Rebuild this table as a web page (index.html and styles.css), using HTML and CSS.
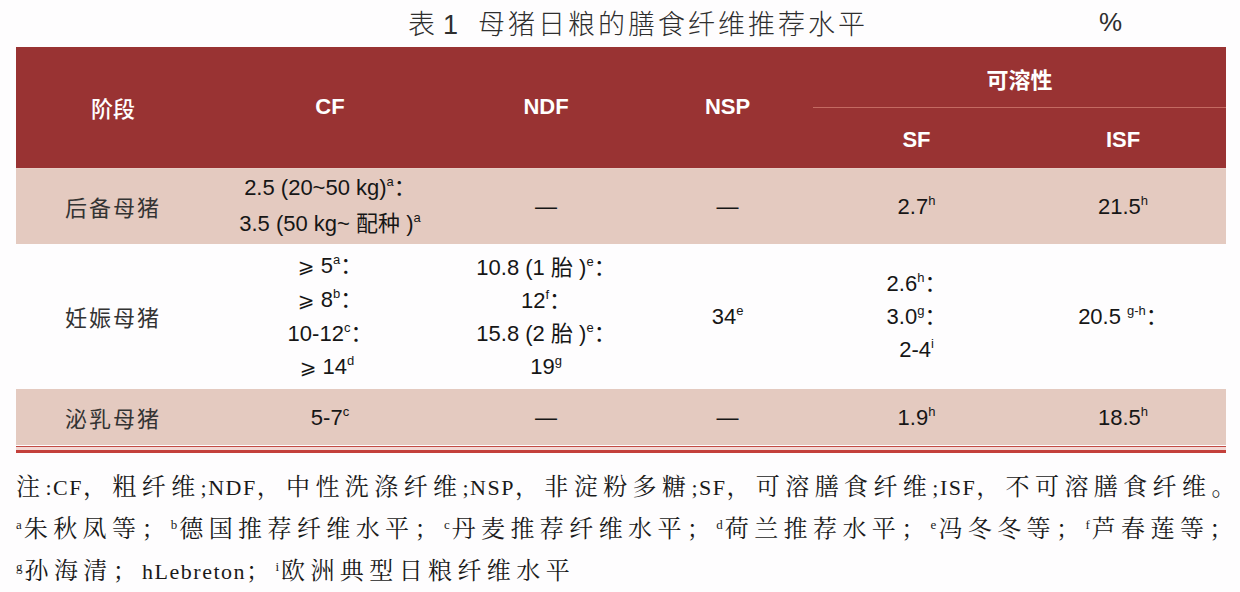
FILE: index.html
```html
<!DOCTYPE html>
<html lang="zh-CN">
<head>
<meta charset="utf-8">
<title>表1 母猪日粮的膳食纤维推荐水平</title>
<link rel="stylesheet" href="styles.css">
</head>
<body>
<div class="page">
  <div class="caption">
    <span class="caption-title">表<span class="num">1</span>母猪日粮的膳食纤维推荐水平</span>
    <span class="caption-unit">%</span>
  </div>
  <table class="fiber">
    <colgroup>
      <col class="c1"><col class="c2"><col class="c3"><col class="c4"><col class="c5"><col class="c6">
    </colgroup>
    <thead>
      <tr class="h1">
        <th rowspan="2" class="stage-head">阶段</th>
        <th rowspan="2">CF</th>
        <th rowspan="2">NDF</th>
        <th rowspan="2">NSP</th>
        <th colspan="2" class="group">可溶性</th>
      </tr>
      <tr class="h2">
        <th>SF</th>
        <th>ISF</th>
      </tr>
    </thead>
    <tbody>
      <tr class="r1 shade">
        <td class="stage">后备母猪</td>
        <td class="lines36">2.5 (20~50 kg)<sup>a</sup>：<br>3.5 (50 kg~ 配种 )<sup>a</sup></td>
        <td>—</td>
        <td>—</td>
        <td>2.7<sup>h</sup></td>
        <td>21.5<sup>h</sup></td>
      </tr>
      <tr class="r2">
        <td class="stage">妊娠母猪</td>
        <td><span class="ge">⩾</span> 5<sup>a</sup>：<br><span class="ge">⩾</span> 8<sup>b</sup>：<br>10-12<sup>c</sup>：<br><span class="ge">⩾</span> 14<sup>d</sup>&nbsp;</td>
        <td>10.8 (1 胎 )<sup>e</sup>：<br>12<sup>f</sup>：<br>15.8 (2 胎 )<sup>e</sup>：<br>19<sup>g</sup></td>
        <td>34<sup>e</sup></td>
        <td>2.6<sup>h</sup>：<br>3.0<sup>g</sup>：<br>2-4<sup>i</sup></td>
        <td>20.5 <sup>g-h</sup>：</td>
      </tr>
      <tr class="r3 shade">
        <td class="stage">泌乳母猪</td>
        <td>5-7<sup>c</sup></td>
        <td>—</td>
        <td>—</td>
        <td>1.9<sup>h</sup></td>
        <td>18.5<sup>h</sup></td>
      </tr>
    </tbody>
  </table>
  <div class="double-rule"></div>
  <div class="notes">
    <p class="n1">注<span class="lat">:CF</span>，粗纤维<span class="lat">;NDF</span>，中性洗涤纤维<span class="lat">;NSP</span>，非淀粉多糖<span class="lat">;SF</span>，可溶膳食纤维<span class="lat">;ISF</span>，不可溶膳食纤维。</p>
    <p class="n2"><sup>a</sup>朱秋凤等；<sup>b</sup>德国推荐纤维水平；<sup>c</sup>丹麦推荐纤维水平；<sup>d</sup>荷兰推荐水平；<sup>e</sup>冯冬冬等；<sup>f</sup>芦春莲等；</p>
    <p class="n3"><sup>g</sup>孙海清；<span class="lat">hLebreton</span>；<sup>i</sup>欧洲典型日粮纤维水平</p>
  </div>
</div>
</body>
</html>
```
FILE: styles.css
```css
html, body {
  margin: 0;
  padding: 0;
  background: #fefdfe;
}
.page {
  width: 1240px;
  height: 592px;
  padding-left: 16px;
  box-sizing: border-box;
  overflow: hidden;
}
.caption {
  display: flex;
  align-items: center;
  height: 44px;
  padding-left: 392px;
  padding-right: 118px;
  margin-bottom: 3px;
  font-family: "Noto Sans CJK SC", "Liberation Sans", sans-serif;
  color: #2e2e2e;
}
.caption-title {
  font-size: 27px;
  font-weight: 300;
  letter-spacing: 3px;
}
.caption-title .num {
  font-family: "Liberation Sans", sans-serif;
  letter-spacing: 0;
  margin: 0 20px 0 5px;
}
.caption-unit {
  margin-left: auto;
  font-family: "Liberation Sans", sans-serif;
  font-size: 26px;
}
.fiber {
  width: 1210px;
  border-collapse: collapse;
  table-layout: fixed;
  font-family: "Liberation Sans", "Noto Sans CJK SC", sans-serif;
  color: #161616;
}
.c1 { width: 194px; }
.c2 { width: 240px; }
.c3 { width: 192px; }
.c4 { width: 171px; }
.c5 { width: 207px; }
.c6 { width: 206px; }
.fiber th {
  background: #993333;
  color: #ffffff;
  font-size: 22px;
  font-weight: 700;
  padding: 0;
  text-align: center;
  vertical-align: middle;
}
.fiber .stage-head {
  font-weight: 500;
}
.fiber .h1 { height: 60px; }
.fiber .h2 { height: 61px; }
.fiber .h2 th { padding-top: 4px; }
.fiber .group {
  border-bottom: 1px solid #c46a62;
  padding-top: 2px;
}
.fiber td {
  padding: 0;
  text-align: center;
  vertical-align: middle;
  font-size: 22px;
  line-height: 33px;
}
.fiber .shade td {
  background: #e4cac0;
}
.fiber .r1 { height: 76px; }
.fiber .r1 td { border-top: 1px solid #e9cfc7; }
.fiber .r2 { height: 145px; }
.fiber .r3 { height: 56px; }
.fiber .lines36 { line-height: 36px; }
.fiber .stage {
  font-family: "Noto Sans CJK SC", sans-serif;
  font-size: 22px;
  color: #333333;
  letter-spacing: 2px;
}
.ge {
  font-family: "DejaVu Sans", sans-serif;
  font-size: 20px;
}
.fiber sup {
  font-size: 13px;
  line-height: 0;
  vertical-align: 9px;
}
.double-rule {
  width: 1210px;
  height: 3px;
  border-top: 1px solid #c24b45;
  border-bottom: 3px solid #c4403b;
  background: #f2d7d3;
  margin-top: 1px;
}
.notes {
  margin-top: 13px;
  font-family: "Liberation Serif", "Noto Serif CJK SC", "Noto Sans CJK SC", serif;
  font-size: 24px;
  color: #1a1a1a;
}
.notes p {
  margin: 0;
  height: 42px;
  line-height: 42px;
  white-space: nowrap;
  letter-spacing: 5.4px;
}
.notes .lat {
  font-size: 22px;
  letter-spacing: 1.5px;
}
.notes sup {
  font-size: 13px;
  line-height: 0;
  vertical-align: 8px;
  letter-spacing: 0;
  margin-right: 2px;
}
```
